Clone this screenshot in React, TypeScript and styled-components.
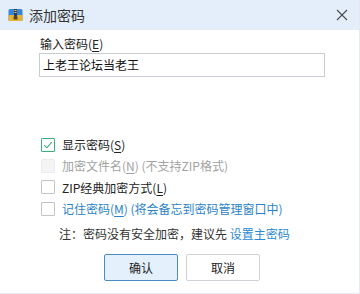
import React from "react";
import styled, { createGlobalStyle } from "styled-components";

const Global = createGlobalStyle`
  html, body { margin: 0; padding: 0; background: #ffffff; }
  body { font-family: "Noto Sans CJK SC", "Noto Sans", sans-serif; }
  * { box-sizing: border-box; }
`;

const Window = styled.div`
  width: 360px;
  height: 294px;
  background: #ffffff;
  display: flex;
  flex-direction: column;
  border-right: 1px solid #e6e9ee;
  border-bottom: 1px solid #e6eaf0;
`;

const TitleBar = styled.div`
  height: 30px;
  flex: none;
  background: #e3eefa;
  display: flex;
  align-items: center;
  padding: 0 0 0 8px;
  gap: 6px;
`;

const Title = styled.div`
  font-size: 14px;
  color: #333;
  line-height: 16px;
  flex: 1;
`;

const CloseBtn = styled.div`
  width: 30px;
  height: 30px;
  display: flex;
  align-items: center;
  justify-content: center;
  margin-right: 2px;
`;

const Body = styled.div`
  padding: 6px 0 0 40px;
  display: flex;
  flex-direction: column;
`;

const Label = styled.div`
  font-size: 12px;
  line-height: 16px;
  color: #222;
  height: 16px;
`;

const Key = styled.span`
  text-decoration: underline;
  text-underline-offset: 2px;
`;

const Input = styled.div`
  margin: 1px 0 0 -1px;
  width: 286px;
  height: 24px;
  border: 1px solid #c9cdd3;
  padding: 0 0 0 3px;
  font-size: 12px;
  line-height: 22px;
  color: #111;
`;

const Options = styled.div`
  margin-top: 57px;
  display: flex;
  flex-direction: column;
`;

const Row = styled.div<{ $tone: "dark" | "muted" | "link" }>`
  height: 21.3px;
  display: flex;
  align-items: center;
  gap: 7px;
  font-size: 12px;
  color: ${(p) => (p.$tone === "muted" ? "#a2a2a2" : p.$tone === "link" ? "#2a83c8" : "#222")};
`;

const Box = styled.span<{ $state: "checked" | "disabled" | "empty" }>`
  width: 14px;
  height: 14px;
  margin-left: 1px;
  flex: none;
  border: 1px solid
    ${(p) => (p.$state === "checked" ? "#3dae7a" : p.$state === "disabled" ? "#ebebeb" : "#c4c4c4")};
  background: ${(p) => (p.$state === "disabled" ? "#f4f4f4" : "#fff")};
  border-radius: 1px;
  display: flex;
  align-items: center;
  justify-content: center;
`;

const Note = styled.div`
  margin: 7px 0 0 19px;
  font-size: 12px;
  line-height: 16px;
  color: #333;
`;

const Link = styled.span`
  color: #2a8ad0;
`;

const Buttons = styled.div`
  margin: 12px 0 0 64px;
  display: flex;
  gap: 8px;
`;

const Button = styled.div<{ $primary?: boolean }>`
  width: 74px;
  height: 27px;
  display: flex;
  align-items: center;
  justify-content: center;
  font-size: 12px;
  color: #222;
  border: 1px solid ${(p) => (p.$primary ? "#4a8cc4" : "#cfd3d8")};
  background: ${(p) => (p.$primary ? "#e4f0fb" : "#ffffff")};
  border-radius: 2px;
`;

const ZipIcon = () => (
  <svg width="15" height="14" viewBox="0 0 15 14">
    <rect x="0.5" y="1" width="14" height="12" rx="1.5" fill="#3a86d6" />
    <rect x="0.5" y="7" width="14" height="6" rx="1" fill="#e4b43a" />
    <rect x="6" y="1" width="3" height="9" fill="#2b3f5c" />
    <rect x="6.5" y="2" width="2" height="1" fill="#e9c35a" />
    <rect x="6.5" y="4" width="2" height="1" fill="#e9c35a" />
    <rect x="5.5" y="8.5" width="4" height="3" rx="0.5" fill="#5a4a1e" />
  </svg>
);

const CloseIcon = () => (
  <svg width="12" height="12" viewBox="0 0 12 12">
    <path d="M1 1 L11 11 M11 1 L1 11" stroke="#4a4a4a" strokeWidth="1.1" fill="none" />
  </svg>
);

const Check = () => (
  <svg width="10" height="10" viewBox="0 0 10 10">
    <path d="M1.2 5.2 L3.9 7.8 L8.8 2.2" stroke="#3dae7a" strokeWidth="1.1" fill="none" />
  </svg>
);

export default function App() {
  return (
    <>
      <Global />
      <Window>
        <TitleBar>
          <ZipIcon />
          <Title>添加密码</Title>
          <CloseBtn>
            <CloseIcon />
          </CloseBtn>
        </TitleBar>
        <Body>
          <Label>
            输入密码(<Key>E</Key>)
          </Label>
          <Input>上老王论坛当老王</Input>
          <Options>
            <Row $tone="dark">
              <Box $state="checked">
                <Check />
              </Box>
              <span>
                显示密码(<Key>S</Key>)
              </span>
            </Row>
            <Row $tone="muted">
              <Box $state="disabled" />
              <span>
                加密文件名(<Key>N</Key>) (不支持ZIP格式)
              </span>
            </Row>
            <Row $tone="dark">
              <Box $state="empty" />
              <span>
                ZIP经典加密方式(<Key>L</Key>)
              </span>
            </Row>
            <Row $tone="link">
              <Box $state="empty" />
              <span>
                记住密码(<Key>M</Key>) (将会备忘到密码管理窗口中)
              </span>
            </Row>
          </Options>
          <Note>
            注：密码没有安全加密，建议先 <Link>设置主密码</Link>
          </Note>
          <Buttons>
            <Button $primary>确认</Button>
            <Button>取消</Button>
          </Buttons>
        </Body>
      </Window>
    </>
  );
}
